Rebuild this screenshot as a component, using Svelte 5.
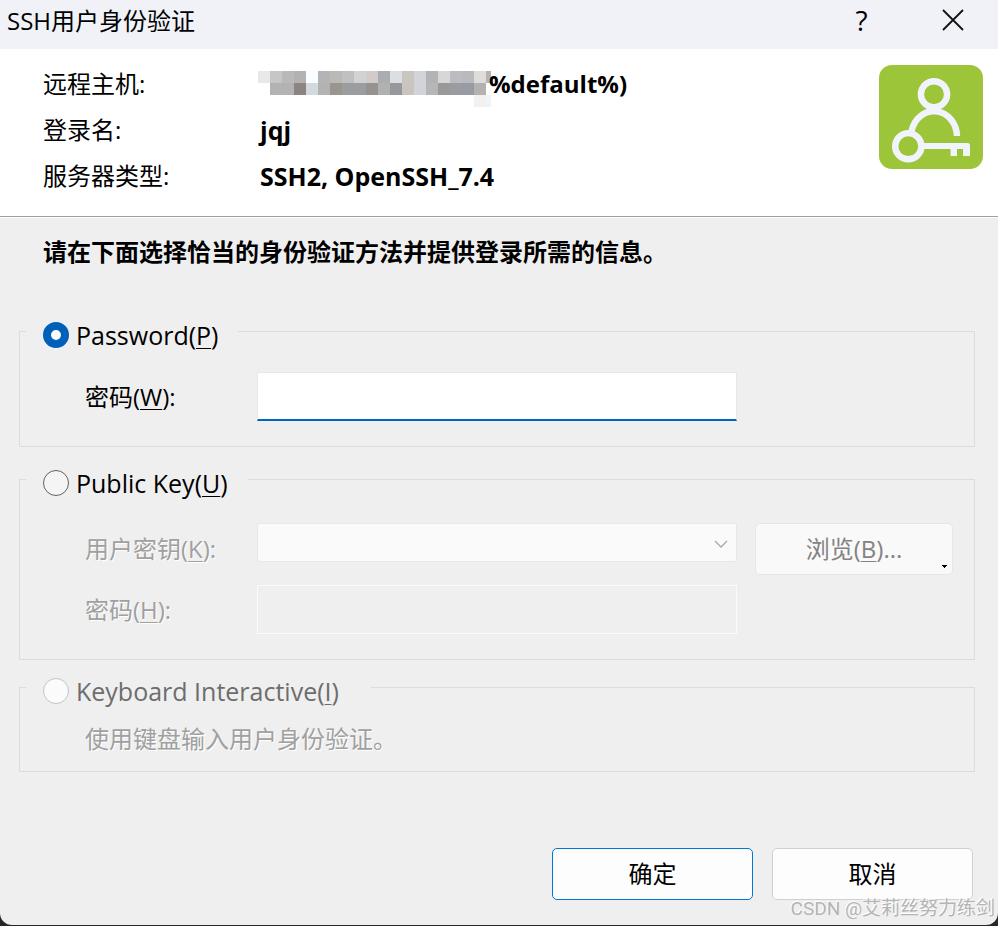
<script lang="ts">
	let method = $state('password');
	let password = $state('');
	let passphrase = $state('');

	let keyOff = $derived(method != 'publickey');

	// 12px blocks covering the host address, one list per row
	const mosaic = [
		'e9e8e7 c6c6c6 b8b9bb b3b2b0 f8fdff b3b4b7 bbb9b7 bfc0c2 d0d2d4 d1cbc9 abacb1 dcdfe1 c9c6c0 d2d4d8 b2b3b4 d7d7d7 bbbcbf b9babd dddddb b5b4b3',
		'ffffff b3b3b3 b3b3b3 8b8480 d4d9df b3b3b4 9b958f 9b9d9e 9b9ea0 94938f b1b1b2 96989b c9c5be d2d4d9 b5b7b6 999997 9a9c9f 979ba2 b3b2b1 ffffff'
	].map((row) => row.split(' '));
</script>

<div class="dialog">
	<header class="titlebar">
		<h1>SSH用户身份验证</h1>
		<button class="caption help" aria-label="帮助">?</button>
		<button class="caption" aria-label="关闭">
			<svg width="22" height="22" viewBox="0 0 22 22">
				<path d="M1 1L21 21M21 1L1 21" stroke="#111" stroke-width="1.8" />
			</svg>
		</button>
	</header>

	<section class="summary">
		<dl>
			<dt>远程主机:</dt>
			<dd class="host">
				<svg width="233" height="36" viewBox="0 0 233 36" shape-rendering="crispEdges">
					{#each mosaic as row, y}
						{#each row as color, x}
							<rect x={x * 12} y={y * 12} width="12" height="12" fill="#{color}" />
						{/each}
					{/each}
					<rect x="216" y="24" width="12" height="12" fill="#f2f1f0" />
					<rect x="228" y="24" width="5" height="12" fill="#eef4f8" />
				</svg><span>%default%)</span>
			</dd>
			<dt>登录名:</dt>
			<dd>jqj</dd>
			<dt>服务器类型:</dt>
			<dd>SSH2, OpenSSH_7.4</dd>
		</dl>
		<svg class="logo" width="104" height="104" viewBox="0 0 104 104" fill="none">
			<rect width="104" height="104" rx="13" fill="#9dc539" />
			<g stroke="#f1f4fd" stroke-width="6.4">
				<circle cx="55" cy="29.3" r="13.1" />
				<path d="M32.6 66A23 25.5 0 0 1 78 71" />
				<circle cx="29.3" cy="81.2" r="13.1" />
			</g>
			<path d="M44 78H88.500Q91 78 91 80.500V91H84V84H78V91H71.600V84H44Z" fill="#f1f4fd" />
		</svg>
	</section>

	<form class="body" onsubmit={(e) => e.preventDefault()}>
		<h2>请在下面选择恰当的身份验证方法并提供登录所需的信息。</h2>

		<fieldset>
			<legend>
				<label>
					<input type="radio" name="method" value="password" bind:group={method} />
					<span>Password(<u>P</u>)</span>
				</label>
			</legend>
			<div class="fields">
				<label for="password">密码(<u>W</u>):</label>
				<input id="password" class="text" type="password" accesskey="w" bind:value={password} />
			</div>
		</fieldset>

		<fieldset>
			<legend>
				<label>
					<input type="radio" name="method" value="publickey" bind:group={method} />
					<span>Public Key(<u>U</u>)</span>
				</label>
			</legend>
			<div class="fields keys" class:off={keyOff}>
				<label for="userkey">用户密钥(<u>K</u>):</label>
				<div class="combo">
					<select id="userkey" disabled={keyOff}><option></option></select>
					<svg width="14" height="8" viewBox="0 0 14 8" fill="none">
						<path d="M1 1L7 7L13 1" stroke="#a8a8a8" stroke-width="1.3" />
					</svg>
				</div>
				<button type="button" class="browse" disabled={keyOff}>
					浏览(<u>B</u>)...
					<svg width="5" height="3" viewBox="0 0 5 3" shape-rendering="crispEdges">
						<path d="M0 0H5V1H4V2H3V3H2V2H1V1H0Z" fill="#000" />
					</svg>
				</button>
				<label for="passphrase">密码(<u>H</u>):</label>
				<input
					id="passphrase"
					class="text"
					type="password"
					disabled={keyOff}
					bind:value={passphrase}
				/>
			</div>
		</fieldset>

		<fieldset class="interactive">
			<legend>
				<label>
					<input type="radio" name="method" value="interactive" bind:group={method} disabled />
					<span>Keyboard Interactive(<u>I</u>)</span>
				</label>
			</legend>
			<p>使用键盘输入用户身份验证。</p>
		</fieldset>

		<div class="actions">
			<button type="submit" class="primary">确定</button>
			<button type="button">取消</button>
		</div>
	</form>

	<span class="watermark">CSDN @艾莉丝努力练剑</span>
</div>

<style>
	:global(body) {
		background: #26262a;
	}
	.dialog,
	.dialog :where(*) {
		box-sizing: border-box;
	}
	.dialog {
		position: relative;
		display: flex;
		flex-direction: column;
		min-height: calc(100vh - 1px);
		overflow: hidden;
		border-radius: 0 0 12px 12px;
		background: #efefef;
		color: #000;
		font: 24px/36px 'Open Sans', 'Noto Sans CJK SC', sans-serif;
	}
	dl,
	dd,
	p {
		margin: 0;
	}
	button,
	input,
	select {
		margin: 0;
		padding: 0;
		font: inherit;
		color: inherit;
	}
	u {
		text-decoration-thickness: 1px;
		text-underline-offset: 3px;
	}

	.titlebar {
		display: flex;
		height: 49px;
		background: #f0f2f8;
	}
	h1 {
		flex: 1;
		margin: 0;
		padding: 3px 0 0 7px;
		font-size: 24px;
		font-weight: 400;
	}
	.caption {
		display: flex;
		align-items: center;
		justify-content: center;
		width: 91px;
		height: 40px;
		border: 0;
		background: none;
	}
	.help {
		font-size: 28px;
	}

	.summary {
		display: flex;
		justify-content: space-between;
		align-items: flex-start;
		padding: 16px 15px 9px 43px;
		border-bottom: 1px solid #a0a0a0;
		background: #fff;
	}
	dl {
		display: grid;
		grid-template-columns: 217px auto;
		row-gap: 10px;
		padding: 1px 0 13px;
	}
	dd {
		font-size: 25px;
		font-weight: 700;
	}
	.host {
		display: flex;
		height: 36px;
		margin-left: -2px;
		font-size: 24px;
	}
	.host svg {
		margin-top: 5px;
	}
	.host span {
		margin-left: -2px;
	}

	.body {
		display: flex;
		flex: 1;
		flex-direction: column;
		padding: 16px 23px 25px 19px;
		border-top: 1px solid #fff;
	}
	h2 {
		margin: 0 0 39px 24px;
		font-size: 24px;
		font-weight: 700;
	}
	fieldset {
		min-width: 0;
		margin: 0 0 10px;
		padding: 0 6px 25px;
		border: 1px solid #dcdcdc;
	}
	legend {
		padding: 8px 20px 0 17px;
		font-size: 25px;
	}
	legend label {
		display: flex;
		align-items: center;
		gap: 7px;
	}
	input[type='radio'] {
		appearance: none;
		width: 26px;
		height: 26px;
		border: 1px solid #626262;
		border-radius: 50%;
		background: #f5f5f5;
	}
	input[type='radio']:checked {
		border: 8px solid #005fb8;
		background: #fff;
	}
	input[type='radio']:disabled {
		border-color: #c4c4c4;
		background: #fbfbfb;
	}
	input:disabled + span {
		color: #6d6d6d;
	}

	.fields {
		display: grid;
		grid-template-columns: 154px minmax(0, 1fr) 198px;
		align-items: center;
		gap: 10px 18px;
		padding: 19px 15px 0 59px;
	}
	.keys {
		padding-top: 22px;
	}
	.off label,
	.interactive p {
		color: #a0a0a0;
		text-shadow: 1px 1px #fff;
	}
	.text {
		width: 100%;
		height: 49px;
		padding: 0 10px;
		border: 1px solid #e8e8e8;
		border-bottom: 2px solid #0067c0;
		outline: 0;
		background: #fff;
	}
	.text:disabled {
		border: 1px solid #fbfbfb;
		background: #efefef;
	}
	.combo {
		position: relative;
		display: flex;
		align-self: start;
	}
	select {
		appearance: none;
		width: 100%;
		height: 39px;
		border: 1px solid #e8e8e8;
		border-radius: 2px;
		background: #fafafa;
		opacity: 1;
	}
	.combo svg {
		position: absolute;
		top: 17px;
		right: 9px;
		pointer-events: none;
	}
	.browse {
		position: relative;
		height: 52px;
		border: 1px solid #e6e6e6;
		border-radius: 5px;
		background: #f9f9f9;
	}
	.browse:disabled {
		color: #838383;
	}
	.browse svg {
		position: absolute;
		right: 5px;
		bottom: 6px;
	}

	.interactive {
		margin: -5px 0 0;
		padding-bottom: 14px;
	}
	.interactive legend {
		padding-right: 32px;
	}
	.interactive p {
		padding: 12px 0 0 59px;
	}

	.actions {
		display: flex;
		justify-content: flex-end;
		gap: 19px;
		margin-top: auto;
		padding-right: 2px;
	}
	.actions button {
		width: 201px;
		height: 52px;
		border: 1px solid #d0d0d0;
		border-radius: 5px;
		background: #fdfdfd;
	}
	.actions .primary {
		border-color: #0078d4;
	}

	.watermark {
		position: absolute;
		right: 3px;
		bottom: 4px;
		color: #b4b4b4;
		font: 19px/24px Roboto, 'Noto Sans CJK SC', sans-serif;
		text-shadow: -1px -1px #fff;
		pointer-events: none;
	}
</style>
